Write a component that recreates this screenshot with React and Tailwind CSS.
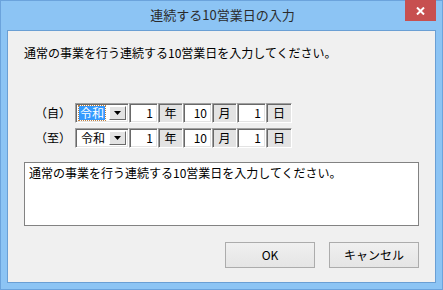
import React from 'react'

const font = { fontFamily: '"Noto Sans CJK JP", "Noto Sans", sans-serif' }

const sunken = 'border-t border-l border-t-[#a0a0a0] border-l-[#a0a0a0] border-b border-r border-b-white border-r-white shadow-[inset_1px_1px_0_#696969,inset_-1px_-1px_0_#e3e3e3]'

const Combo = ({ focused }) => (
    <div className={`w-[54px] h-[20px] bg-white flex items-stretch p-[2px] ${sunken}`}>
        <div className="flex-1 flex items-center pl-[1px]">
            {focused ? (
                <span className="bg-[#3399ff] text-white leading-[14px] px-[1px] outline outline-1 outline-dotted outline-[#c08040]">令和</span>
            ) : (
                <span className="leading-[14px] px-[2px]">令和</span>
            )}
        </div>
        <div className="w-[17px] bg-[#e3e3e3] border border-t-white border-l-white border-b-[#696969] border-r-[#696969] flex items-center justify-center">
            <svg width="7" height="4" viewBox="0 0 7 4"><path d="M0 0h7L3.5 4z" fill="#000" /></svg>
        </div>
    </div>
)

const Num = ({ v }) => (
    <div className={`w-[29px] h-[20px] bg-white flex items-center justify-end pr-[4px] ${sunken}`}>{v}</div>
)

const Unit = ({ t, w = 'w-[25px]' }) => (
    <div className={`${w} h-[20px] bg-[#e3e3e3] flex items-center justify-center ${sunken}`}>{t}</div>
)

const DateRow = ({ label, focused }) => (
    <div className="flex items-center pl-[27px] h-[20px]">
        <div className="w-[36px] mr-[4px] text-center">{label}</div>
        <Combo focused={focused} />
        <Num v="1" />
        <Unit t="年" />
        <Num v="10" />
        <Unit t="月" />
        <Num v="1" />
        <Unit t="日" w="w-[26px]" />
    </div>
)

const Btn = ({ children }) => (
    <button className="w-[90px] h-[26px] border border-[#acacac] bg-gradient-to-b from-[#f0f0f0] to-[#e5e5e5] text-[12px] text-black">
        {children}
    </button>
)

export default function App() {
    return (
        <div style={font} className="w-[443px] h-[290px] bg-[#8cc4f4] border border-[#6ba3dc] flex flex-col text-[12px] text-black">
            {/* title bar */}
            <div className="relative h-[29px] flex items-center justify-center">
                <span className="text-[13px] text-[#2b2b2b] -mt-[2px] ml-[2px]">連続する10営業日の入力</span>
                <div className="absolute right-[6px] -top-[1px] w-[31px] h-[21px] bg-[#c75050] flex items-center justify-center">
                    <svg width="9" height="8" viewBox="0 0 9 8">
                        <path d="M1 0.5l7 7M8 0.5l-7 7" stroke="#fff" strokeWidth="2" />
                    </svg>
                </div>
            </div>

            {/* client area */}
            <div className="mx-[6px] h-[253px] bg-[#f0f0f0] border border-[#6a9fd4] flex flex-col">
                <p className="pl-[16px] mt-[14px] leading-[16px]">通常の事業を行う連続する10営業日を入力してください。</p>

                <div className="mt-[42px] flex flex-col gap-[5px]">
                    <DateRow label="（自）" focused />
                    <DateRow label="（至）" />
                </div>

                <div className="ml-[16px] mt-[14px] w-[395px] h-[64px] bg-white border border-[#828282] px-[4px] pt-[2px] leading-[16px]">
                    通常の事業を行う連続する10営業日を入力してください。
                </div>

                <div className="flex justify-end gap-[14px] mt-[16px] pr-[16px]">
                    <Btn>OK</Btn>
                    <Btn>キャンセル</Btn>
                </div>
            </div>
        </div>
    )
}
